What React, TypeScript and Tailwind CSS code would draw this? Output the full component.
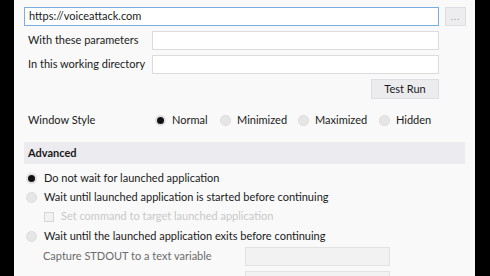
import React from 'react';

function Radio({ checked = false }: { checked?: boolean }) {
  return (
    <span className="w-[11px] h-[11px] rounded-full bg-[#e6e6e6] border border-[#dcdcdc] flex items-center justify-center shrink-0">
      {checked && <span className="w-[7px] h-[7px] rounded-full bg-[#111]" />}
    </span>
  );
}

export default function App() {
  const styles = [
    { label: 'Normal', checked: true },
    { label: 'Minimized' },
    { label: 'Maximized' },
    { label: 'Hidden' }
  ];
  return (
    <div
      className="w-[490px] h-[276px] bg-black flex items-start overflow-hidden text-[11px] text-[#1a1a1a] whitespace-nowrap"
      style={{ fontFamily: 'Lato, "Open Sans", sans-serif' }}>
      <div className="ml-[14px] w-[461px] min-h-[276px] bg-[#f9f9f9] flex flex-col pl-[10px] pr-[9px]">
        {/* Path row */}
        <div className="flex items-center mt-[7px] h-[19px]">
          <div className="w-[415px] h-full border border-[#7aaee0] bg-white flex items-center pl-[4px]">
            https://voiceattack.com
          </div>
          <button className="ml-[6px] w-[21px] h-full bg-[#ededf0] border border-[#dedee2] text-[#9a9a9a] text-[9px] leading-none tracking-[1px]">
            ...
          </button>
        </div>

        <div className="flex items-center mt-[5px] h-[19px]">
          <span className="w-[128px] pl-[4px]">With these parameters</span>
          <div className="w-[287px] h-full border border-[#dcdcdc] bg-white" />
        </div>
        <div className="flex items-center mt-[5px] h-[19px]">
          <span className="w-[128px] pl-[4px]">In this working directory</span>
          <div className="w-[287px] h-full border border-[#dcdcdc] bg-white" />
        </div>

        <div className="flex mt-[5px] w-[415px] justify-end">
          <button className="w-[68px] h-[20px] bg-[#ececef] border border-[#dedee2] text-[#1a1a1a]">
            Test Run
          </button>
        </div>

        {/* Window style */}
        <div className="flex items-center mt-[11px] h-[20px]">
          <span className="w-[131px] pl-[4px]">Window Style</span>
          <div className="flex items-center">
            {styles.map((s, i) =>
            <div key={s.label} className={`flex items-center gap-[6px] ${i === 0 ? 'w-[65px]' : i === 1 ? 'w-[78px]' : 'w-[81px]'}`}>
                <Radio checked={s.checked} />
                <span>{s.label}</span>
              </div>
            )}
          </div>
        </div>

        {/* Advanced */}
        <div className="mt-[12px] h-[22px] w-[441px] bg-[#ececf0] flex items-center pl-[4px] font-bold">
          Advanced
        </div>

        <div className="flex flex-col pl-[2px]">
          <div className="flex items-center gap-[7px] h-[19px] mt-[5px]">
            <Radio checked />
            <span>Do not wait for launched application</span>
          </div>
          <div className="flex items-center gap-[7px] h-[19px]">
            <Radio />
            <span>Wait until launched application is started before continuing</span>
          </div>
          <div className="flex items-center gap-[7px] h-[19px] pl-[18px] text-[#c8c8c8]">
            <span className="w-[10px] h-[10px] border border-[#d6d6d6] bg-[#f2f2f2]" />
            <span>Set command to target launched application</span>
          </div>
          <div className="flex items-center gap-[7px] h-[19px] mt-[1px]">
            <Radio />
            <span>Wait until the launched application exits before continuing</span>
          </div>
          <div className="flex items-center h-[19px] mt-[1px] pl-[17px] text-[#6b6b6b]">
            <span className="w-[202px]">Capture STDOUT to a text variable</span>
            <div className="w-[145px] h-full border border-[#e2e2e2] bg-[#f2f2f2]" />
          </div>
          <div className="flex h-[20px] mt-[5px] pl-[219px]">
            <div className="w-[145px] h-full border border-[#e2e2e2] bg-[#f2f2f2]" />
          </div>
        </div>
      </div>
    </div>
  );
}
